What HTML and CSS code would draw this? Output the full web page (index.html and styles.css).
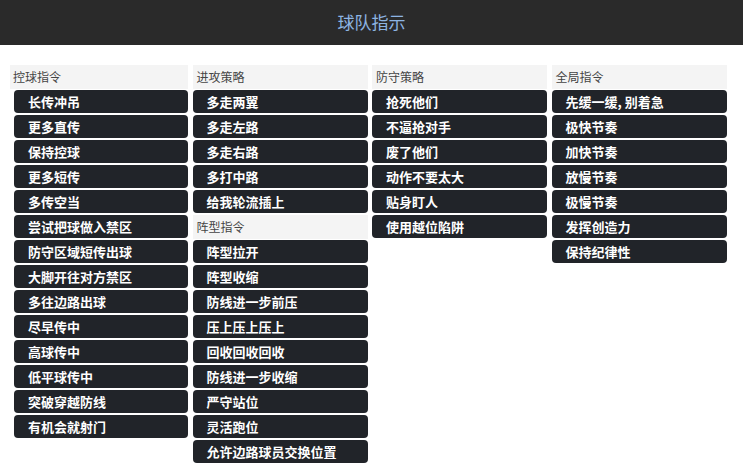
FILE: index.html
```html
<!DOCTYPE html>
<html lang="zh-CN">
<head>
    <meta charset="UTF-8">
    <meta name="viewport" content="width=device-width, initial-scale=1.0">
    <title>球队指示</title>
    <link rel="stylesheet" href="styles.css">
</head>
<body>

    <div class="topbar">球队指示</div>

    <div class="board">
        <div class="column first">
            <div class="group-title">控球指令</div>
            <button class="order">长传冲吊</button>
            <button class="order">更多直传</button>
            <button class="order">保持控球</button>
            <button class="order">更多短传</button>
            <button class="order">多传空当</button>
            <button class="order">尝试把球做入禁区</button>
            <button class="order">防守区域短传出球</button>
            <button class="order">大脚开往对方禁区</button>
            <button class="order">多往边路出球</button>
            <button class="order">尽早传中</button>
            <button class="order">高球传中</button>
            <button class="order">低平球传中</button>
            <button class="order">突破穿越防线</button>
            <button class="order">有机会就射门</button>
        </div>

        <div class="column">
            <div class="group-title">进攻策略</div>
            <button class="order">多走两翼</button>
            <button class="order">多走左路</button>
            <button class="order">多走右路</button>
            <button class="order">多打中路</button>
            <button class="order">给我轮流插上</button>
            <div class="group-title">阵型指令</div>
            <button class="order">阵型拉开</button>
            <button class="order">阵型收缩</button>
            <button class="order">防线进一步前压</button>
            <button class="order">压上压上压上</button>
            <button class="order">回收回收回收</button>
            <button class="order">防线进一步收缩</button>
            <button class="order">严守站位</button>
            <button class="order">灵活跑位</button>
            <button class="order">允许边路球员交换位置</button>
        </div>

        <div class="column">
            <div class="group-title">防守策略</div>
            <button class="order">抢死他们</button>
            <button class="order">不逼抢对手</button>
            <button class="order">废了他们</button>
            <button class="order">动作不要太大</button>
            <button class="order">贴身盯人</button>
            <button class="order">使用越位陷阱</button>
        </div>

        <div class="column">
            <div class="group-title">全局指令</div>
            <button class="order">先缓一缓, 别着急</button>
            <button class="order">极快节奏</button>
            <button class="order">加快节奏</button>
            <button class="order">放慢节奏</button>
            <button class="order">极慢节奏</button>
            <button class="order">发挥创造力</button>
            <button class="order">保持纪律性</button>
        </div>
    </div>

</body>
</html>
```

FILE: styles.css
```css
body {
    margin: 0;
    background-color: #fff;
    font-family: "Noto Sans CJK SC", "Noto Sans", sans-serif;
}

.topbar {
    height: 45px;
    line-height: 44px;
    background-color: #2a2a2a;
    color: #8db4e2;
    font-size: 17px;
    text-align: center;
}

.board {
    display: grid;
    grid-template-columns: 174px 175px 175px 175px;
    column-gap: 4.5px;
    align-items: start;
    padding: 20px 0 0 14px;
}

.column {
    display: flex;
    flex-direction: column;
}

.group-title {
    height: 24px;
    line-height: 24px;
    padding-left: 4px;
    margin-bottom: 1px;
    background-color: #f4f4f4;
    color: #444;
    font-size: 12px;
}

.column .order + .group-title {
    margin-top: 0;
}

.first .group-title {
    margin-left: -4px;
    padding-left: 3px;
}

.order {
    height: 23px;
    margin: 0 0 2px 0;
    padding: 0 0 0 14px;
    border: none;
    border-radius: 4px;
    background-color: #212429;
    color: #fff;
    font-family: inherit;
    font-size: 13px;
    font-weight: bold;
    text-align: left;
    cursor: pointer;
}
```
